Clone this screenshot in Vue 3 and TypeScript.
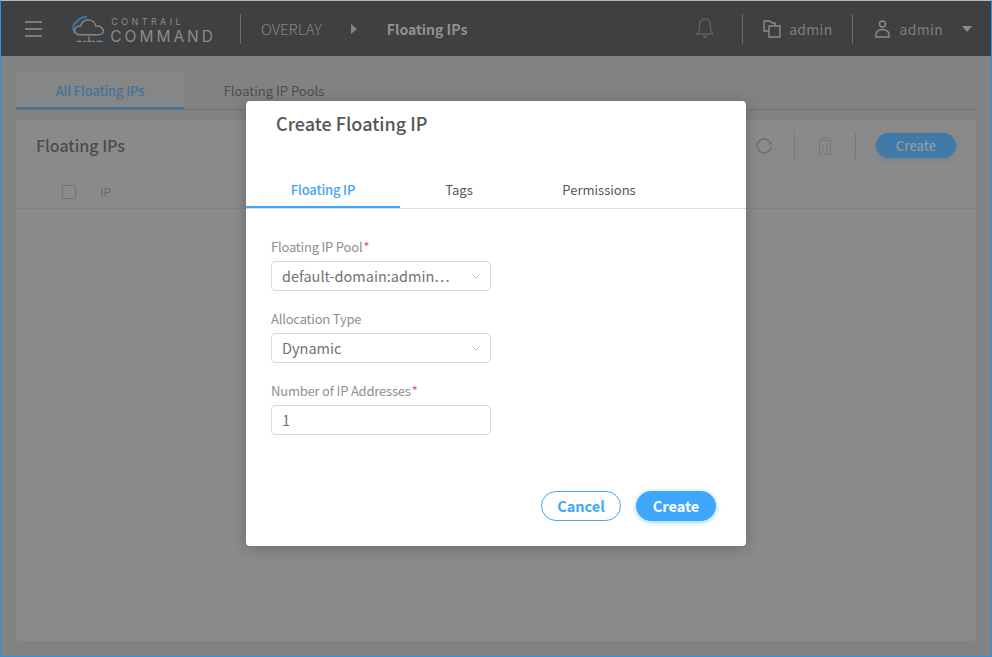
<script setup lang="ts">
// Tabs in the dialog, first one is active
const dialogTabs: string[] = ['Floating IP', 'Tags', 'Permissions'];
</script>

<template>
  <div class="page">
    <header class="topbar">
      <svg class="burger" width="17" height="16" viewBox="0 0 17 16">
        <path d="M0 1h17M0 8h17M0 15h17" stroke="#8f9191" stroke-width="1.4" fill="none" />
      </svg>
      <div class="logo">
        <svg class="logo-mark" width="34" height="28" viewBox="0 0 34 28" fill="none">
          <path d="M3 18C0 14 1 8 6 6C7 3 11 1 16 1.500" stroke="#3f7199" stroke-width="2.400" />
          <path d="M9 20C5 20 3 18 3 15.500C3 12.500 6 10.500 9 11C10 7 13 4.500 17 4.500C21.500 4.500 24.500 7.500 25 11C29 10.500 33 12.500 33 16C33 18.500 31 20 28 20Z" stroke="#868888" stroke-width="1.500" />
          <path d="M5 27h5M12 27h3M16 27h4M21 27h3M26 27h6M18 22v5" stroke="#8a8c8c" stroke-width="1.200" />
        </svg>
        <div class="logo-text">
          <span class="logo-small">CONTRAIL</span>
          <span class="logo-big">COMMAND</span>
        </div>
      </div>
      <span class="bar-sep first-sep"></span>
      <span class="crumb">OVERLAY</span>
      <span class="crumb-arrow"></span>
      <span class="crumb-current">Floating IPs</span>

      <div class="bar-right">
        <svg class="bell" width="18" height="21" viewBox="0 0 18 21" fill="none">
          <path d="M1 16c2-2 2.500-3 2.500-6V6.500a5.500 5.500 0 0 1 11 0V10c0 3 .5 4 2.500 6z" stroke="#5e5f60" stroke-width="1.400" />
          <path d="M6.500 17.500a2.500 2.500 0 0 0 5 0z" fill="#5e5f60" />
        </svg>
        <span class="bar-sep"></span>
        <div class="bar-item domain">
          <svg width="18" height="18" viewBox="0 0 18 18" fill="none">
            <path d="M1 1h6l2 2h3v3M1 1v10h5" stroke="#8a8c8c" stroke-width="1.400" />
            <path d="M6 6h11v11H6z" stroke="#8a8c8c" stroke-width="1.400" />
          </svg>
          <span>admin</span>
        </div>
        <span class="bar-sep"></span>
        <div class="bar-item user">
          <svg width="15" height="18" viewBox="0 0 15 18" fill="none">
            <circle cx="7.500" cy="4" r="3" stroke="#8a8c8c" stroke-width="1.400" />
            <path d="M1 17v-2.500C1 11.500 4 9.500 7.500 9.500s6.500 2 6.500 5V17z" stroke="#8a8c8c" stroke-width="1.400" />
          </svg>
          <span>admin</span>
          <span class="caret"></span>
        </div>
      </div>
    </header>

    <main class="content">
      <nav class="page-tabs">
        <span class="page-tab active">All Floating IPs</span>
        <span class="page-tab">Floating IP Pools</span>
      </nav>

      <section class="card">
        <div class="card-head">
          <h2>Floating IPs</h2>
          <div class="card-tools">
            <svg width="18" height="18" viewBox="0 0 18 18" fill="none">
              <path d="M16 10.500A7 7 0 1 1 13.500 3.500L15.500 6" stroke="#6f7070" stroke-width="1.600" />
              <path d="M13 7.500h5l-2.500-3z" fill="#6f7070" />
            </svg>
            <span class="tool-sep tall"></span>
            <svg width="14" height="18" viewBox="0 0 14 18" fill="none">
              <path d="M0 3.500h14M4.500 3V1h5v2M1.500 4v13h11V4M5 7v7M9 7v7" stroke="#777979" stroke-width="1.200" />
            </svg>
            <span class="tool-sep short"></span>
            <span class="dim-create">Create</span>
          </div>
        </div>
        <div class="table-head">
          <span class="check"></span>
          <span class="col-ip">IP</span>
        </div>
      </section>
    </main>

    <div class="modal-layer">
      <div class="modal">
        <h3 class="modal-title">Create Floating IP</h3>
        <div class="modal-tabs">
          <span
            v-for="(tab, i) in dialogTabs"
            :key="tab"
            class="modal-tab"
            :class="{ active: i === 0 }"
          >{{ tab }}</span>
        </div>

        <form class="form">
          <div class="field">
            <label>Floating IP Pool<i>*</i></label>
            <div class="control">
              <span class="value">default-domain:admin…</span>
              <svg width="8" height="5" viewBox="0 0 8 5" fill="none">
                <path d="M.5.5 4 4 7.500.5" stroke="#bdbdbd" />
              </svg>
            </div>
          </div>
          <div class="field">
            <label>Allocation Type</label>
            <div class="control">
              <span class="value">Dynamic</span>
              <svg width="8" height="5" viewBox="0 0 8 5" fill="none">
                <path d="M.5.5 4 4 7.500.5" stroke="#bdbdbd" />
              </svg>
            </div>
          </div>
          <div class="field">
            <label>Number of IP Addresses<i>*</i></label>
            <div class="control">
              <span class="value">1</span>
            </div>
          </div>
        </form>

        <div class="modal-foot">
          <button type="button" class="btn outline">Cancel</button>
          <button type="button" class="btn solid">Create</button>
        </div>
      </div>
    </div>
  </div>
</template>

<style>
html,
body {
  margin: 0;
  background: #808281;
}
</style>

<style scoped>
.page {
  position: relative;
  box-sizing: border-box;
  width: 992px;
  height: 657px;
  overflow: hidden;
  display: flex;
  flex-direction: column;
  border: 1px solid #2a93e6;
  border-top-color: #b9b9b9;
  background: #818382;
  font-family: "Noto Sans CJK SC", "Noto Sans", sans-serif;
}

/* Top bar */
.topbar {
  flex: none;
  height: 55px;
  display: flex;
  align-items: center;
  background: #3f4041;
  color: #8a8c8c;
  padding-left: 24px;
}

.burger {
  flex: none;
}

.logo {
  display: flex;
  align-items: flex-start;
  margin-left: 30px;
  width: 144px;
}

.logo-mark {
  margin-top: 2px;
}

.logo-text {
  display: flex;
  flex-direction: column;
  margin-left: 6px;
  font-family: "Inter", sans-serif;
  color: #8a8c8c;
}

.logo-small {
  font-size: 9px;
  line-height: 11px;
  letter-spacing: 3.400px;
  margin-left: 1px;
  margin-top: 3px;
}

.logo-big {
  font-size: 15.500px;
  line-height: 17px;
  letter-spacing: 3px;
  margin-top: 1px;
}

.bar-sep {
  flex: none;
  width: 1px;
  height: 30px;
  background: #6c6d6e;
}

.first-sep {
  margin-left: 24px;
}

.crumb {
  margin-left: 20px;
  font-size: 15px;
  font-weight: 300;
  color: #858787;
}

.crumb-arrow {
  margin-left: 29px;
  width: 0;
  height: 0;
  border-style: solid;
  border-width: 5px 0 5px 6px;
  border-color: transparent transparent transparent #858787;
}

.crumb-current {
  margin-left: 30px;
  font-size: 14px;
  font-weight: 700;
  color: #8f9191;
}

.bar-right {
  margin-left: auto;
  display: flex;
  align-items: center;
  padding-right: 19px;
}

.bell {
  margin-right: 28px;
}

.bar-item {
  display: flex;
  align-items: center;
  font-size: 14px;
  letter-spacing: 0.300px;
  color: #7d7f7f;
}

.domain {
  gap: 8px;
  margin: 0 19px 0 20px;
}

.user {
  gap: 10px;
  margin-left: 22px;
}

.caret {
  margin-left: 9px;
  width: 0;
  height: 0;
  border-style: solid;
  border-width: 6px 5.500px 0;
  border-color: #8a8c8c transparent transparent;
}

/* Dimmed page behind the dialog */
.content {
  flex: 1;
  display: flex;
  flex-direction: column;
  padding: 15px 15px 15px;
}

.page-tabs {
  flex: none;
  display: flex;
  height: 38px;
  border-bottom: 1px solid #6f7170;
}

.page-tab {
  box-sizing: border-box;
  height: 38px;
  width: 168px;
  padding-top: 2px;
  display: flex;
  align-items: center;
  justify-content: center;
  white-space: nowrap;
  font-size: 13px;
  color: #4b4d4f;
  border-bottom: 2px solid transparent;
}

.page-tab.active {
  background: #858786;
  color: #44729b;
  font-weight: 500;
  letter-spacing: -0.150px;
  border-bottom-color: #3f749f;
}

.page-tab + .page-tab {
  width: 180px;
}

.card {
  flex: 1;
  margin-top: 10px;
  background: #8a8a8a;
  border-radius: 4px;
}

.card-head {
  height: 51px;
  display: flex;
  align-items: center;
  justify-content: space-between;
  padding: 0 20px;
}

.card-head h2 {
  margin: -2px 0 0;
  font-size: 16px;
  font-weight: 500;
  color: #4a4c4e;
}

.card-tools {
  display: flex;
  align-items: center;
}

.tool-sep {
  width: 1px;
  background: #7a7a7a;
}

.tool-sep.tall {
  height: 30px;
  margin: 0 23px 0 21px;
}

.tool-sep.short {
  height: 26px;
  margin: 0 20px 0 23px;
}

.dim-create {
  box-sizing: border-box;
  width: 80px;
  height: 25px;
  padding-bottom: 1px;
  border-radius: 13px;
  background: #417aa6;
  color: #8d9ba6;
  font-size: 13px;
  font-weight: 500;
  display: flex;
  align-items: center;
  justify-content: center;
  box-shadow: 0 1px 4px rgba(65, 122, 166, 0.5);
}

.table-head {
  box-sizing: border-box;
  height: 38px;
  display: flex;
  align-items: center;
  padding: 4px 0 0 46px;
  border-bottom: 1px solid #828282;
}

.check {
  box-sizing: border-box;
  width: 14px;
  height: 14px;
  border: 1px solid #727272;
  border-radius: 2px;
  background: #8a8a8a;
}

.col-ip {
  margin-left: 24px;
  font-size: 12px;
  color: #6e6c58;
}

/* Dialog */
.modal-layer {
  position: absolute;
  inset: 0;
  display: flex;
  justify-content: center;
  align-items: flex-start;
  padding-top: 100px;
}

.modal {
  box-sizing: border-box;
  width: 500px;
  height: 445px;
  display: flex;
  flex-direction: column;
  background: #fff;
  border-radius: 4px;
  box-shadow: 0 2px 14px rgba(0, 0, 0, 0.22);
}

.modal-title {
  margin: 0;
  padding: 9px 30px 0;
  height: 62px;
  font-size: 18px;
  line-height: 26px;
  font-weight: 500;
  color: #54575a;
}

.modal-tabs {
  display: flex;
  height: 36px;
  border-bottom: 1px solid #dcdcdc;
}

.modal-tab {
  box-sizing: border-box;
  height: 36px;
  width: 118px;
  line-height: 36px;
  text-align: center;
  font-size: 13px;
  color: #55585b;
}

.modal-tab:last-child {
  width: 162px;
}

.modal-tab.active {
  width: 154px;
  color: #3ea6fb;
  font-weight: 500;
  letter-spacing: -0.150px;
  border-bottom: 2px solid #3ea6fb;
}

.form {
  display: flex;
  flex-direction: column;
  gap: 18px;
  padding: 28px 0 0 25px;
}

.field {
  width: 220px;
}

.field label {
  display: block;
  height: 19px;
  line-height: 19px;
  margin-bottom: 5px;
  font-size: 13px;
  letter-spacing: -0.200px;
  color: #8d9093;
}

.field label i {
  font-style: normal;
  color: #f5517a;
  margin-left: 1px;
}

.control {
  box-sizing: border-box;
  height: 30px;
  display: flex;
  align-items: center;
  justify-content: space-between;
  padding: 0 10px;
  border: 1px solid #d9d9d9;
  border-radius: 4px;
  font-size: 14.500px;
  color: #707376;
}

.value {
  margin-top: -1px;
}

.modal-foot {
  margin-top: auto;
  display: flex;
  justify-content: flex-end;
  gap: 15px;
  padding: 0 30px 25px 0;
}

.btn {
  box-sizing: border-box;
  width: 80px;
  height: 30px;
  padding: 0 0 2px;
  border-radius: 15px;
  font-family: inherit;
  font-size: 14.500px;
  font-weight: 700;
}

.btn.outline {
  background: #fff;
  border: 1px solid #3ea6fb;
  color: #3ea6fb;
}

.btn.solid {
  background: #3ea6fb;
  border: 1px solid #3ea6fb;
  color: #fff;
  box-shadow: 0 1px 5px rgba(62, 166, 251, 0.6);
}
</style>
